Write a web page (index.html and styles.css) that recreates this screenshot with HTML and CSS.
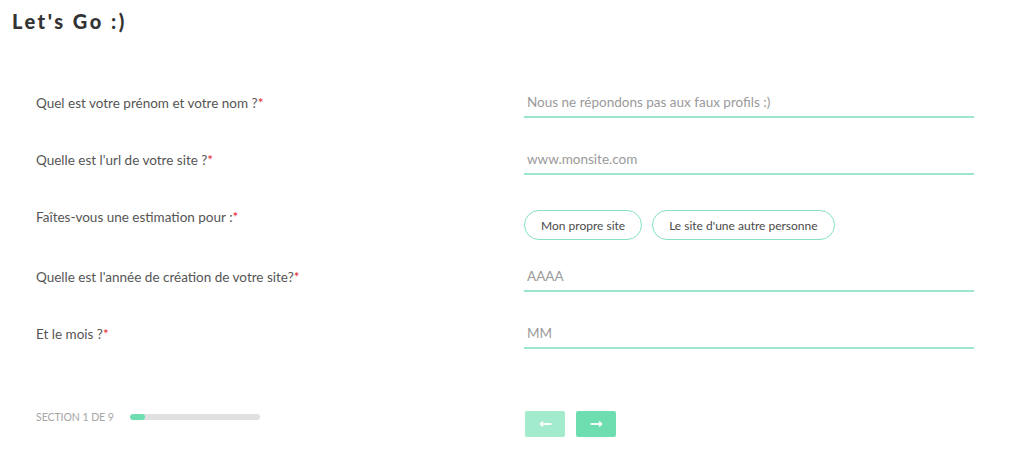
FILE: index.html
```html
<!DOCTYPE html>
<html lang="fr">
<head>
<meta charset="utf-8">
<title>Let's Go :)</title>
<link rel="stylesheet" href="styles.css">
</head>
<body>
<h1 class="title">Let's Go :)</h1>
<form class="form">
  <div class="row">
    <label class="label">Quel est votre prénom et votre nom ?<span class="req">*</span></label>
    <input class="field" type="text" placeholder="Nous ne répondons pas aux faux profils :)">
  </div>
  <div class="row">
    <label class="label">Quelle est l'url de votre site ?<span class="req">*</span></label>
    <input class="field" type="text" placeholder="www.monsite.com">
  </div>
  <div class="row row-choice">
    <label class="label">Faîtes-vous une estimation pour :<span class="req">*</span></label>
    <div class="choices">
      <button type="button" class="pill">Mon propre site</button>
      <button type="button" class="pill">Le site d'une autre personne</button>
    </div>
  </div>
  <div class="row">
    <label class="label">Quelle est l'année de création de votre site?<span class="req">*</span></label>
    <input class="field" type="text" placeholder="AAAA">
  </div>
  <div class="row">
    <label class="label">Et le mois ?<span class="req">*</span></label>
    <input class="field" type="text" placeholder="MM">
  </div>
  <div class="row footer">
    <div class="progress-wrap">
      <span class="section">SECTION 1 DE 9</span>
      <div class="bar"><div class="bar-fill" style="width:12%"></div></div>
    </div>
    <div class="nav">
      <button type="button" class="nav-btn prev" aria-label="Précédent">
        <svg width="13" height="8" viewBox="0 0 13 8"><path d="M1.5 4H12.5" stroke="#fff" stroke-width="1.8"/><path d="M4 1.5L1.5 4L4 6.5" fill="none" stroke="#fff" stroke-width="1.6"/></svg>
      </button>
      <button type="button" class="nav-btn next" aria-label="Suivant">
        <svg width="13" height="8" viewBox="0 0 13 8"><path d="M0.5 4H11.5" stroke="#fff" stroke-width="1.8"/><path d="M9 1.5L11.5 4L9 6.5" fill="none" stroke="#fff" stroke-width="1.6"/></svg>
      </button>
    </div>
  </div>
</form>
</body>
</html>
```
FILE: styles.css
```css
* { box-sizing: border-box; }
html, body { margin: 0; padding: 0; background: #fff; }
body {
  font-family: "Lato", "Liberation Sans", sans-serif;
  color: #4a4a4a;
  width: 1024px;
  height: 452px;
  overflow: hidden;
}
.title {
  margin: 0;
  padding: 9px 0 0 12px;
  font-size: 20px;
  line-height: 24px;
  font-weight: 900;
  letter-spacing: 2.5px;
  color: #333;
}
.form {
  padding: 54px 0 0 36px;
}
.row {
  display: grid;
  grid-template-columns: 488px 450px;
  align-items: start;
  margin-bottom: 26px;
}
.label {
  font-size: 13.5px;
  line-height: 16px;
  padding-top: 8px;
  color: #555;
}
.req { color: #e8202a; }
.field {
  display: block;
  width: 450px;
  height: 31px;
  border: 0;
  border-bottom: 2px solid #9ae8c9;
  padding: 0 3px;
  font-family: inherit;
  font-size: 13.5px;
  color: #444;
  background: transparent;
  outline: none;
}
.field::placeholder { color: #9a9a9a; }
.row-choice { margin-bottom: 21px; }
.choices {
  display: flex;
  gap: 10px;
  padding-top: 9px;
}
.pill {
  height: 30px;
  padding: 0 16px;
  border: 1.5px solid #84e2c0;
  border-radius: 15px;
  background: #fff;
  font-family: inherit;
  font-size: 12px;
  color: #4a4a4a;
  cursor: pointer;
}
.footer {
  margin-top: 62px;
  align-items: start;
}
.progress-wrap {
  display: flex;
  align-items: center;
  gap: 16px;
  height: 12px;
}
.section {
  font-size: 10.5px;
  color: #a5a5a5;
  letter-spacing: -0.05px;
}
.bar {
  width: 130px;
  height: 6px;
  border-radius: 3px;
  background: #e0e0e0;
  overflow: hidden;
}
.bar-fill {
  height: 100%;
  border-radius: 3px;
  background: #6edeb1;
}
.nav {
  display: flex;
  gap: 11px;
  padding-left: 1px;
}
.nav-btn {
  width: 40px;
  height: 26px;
  border: 0;
  border-radius: 2px;
  display: flex;
  align-items: center;
  justify-content: center;
  cursor: pointer;
  padding: 0;
}
.prev { background: #a2ebcc; }
.next { background: #6edeb1; }
```
